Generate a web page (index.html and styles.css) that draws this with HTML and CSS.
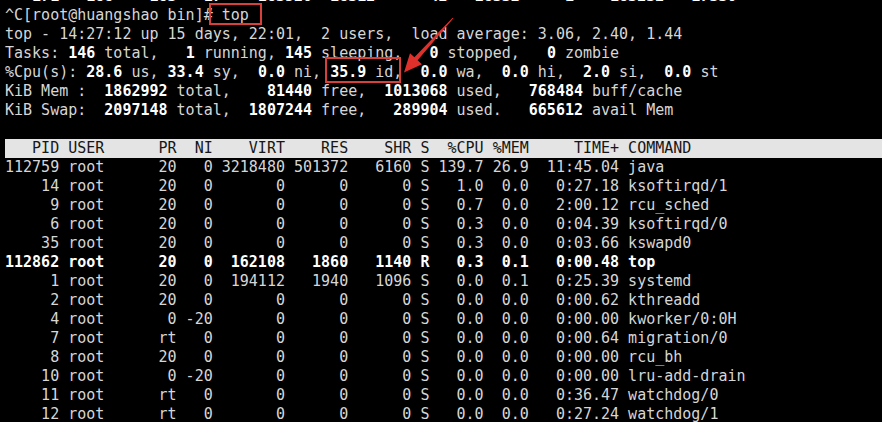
FILE: index.html
```html
<!DOCTYPE html>
<html lang="en">

<head>
    <meta charset="UTF-8">
    <meta name="viewport" content="width=device-width, initial-scale=1.0">
    <title>top</title>
    <link rel="stylesheet" href="styles.css">
</head>

<body>
    <div class="term">
        <!-- 上一屏残留的一行，只露出底部 -->
        <div class="line"><b>   171   188    183   17    183520  18312      42   18332     1    183232   17330</b></div>
        <div class="line">^C[root@huangshao bin]# top</div>
        <div class="line">top - 14:27:12 up 15 days, 22:01,  2 users,  load average: 3.06, 2.40, 1.44</div>
        <div class="line">Tasks: <b>146</b> total,   <b>1</b> running, <b>145</b> sleeping,   <b>0</b> stopped,   <b>0</b> zombie</div>
        <div class="line">%Cpu(s): <b>28.6</b> us, <b>33.4</b> sy,  <b>0.0</b> ni, <b>35.9</b> id,  <b>0.0</b> wa,  <b>0.0</b> hi,  <b>2.0</b> si,  <b>0.0</b> st</div>
        <div class="line">KiB Mem :  <b>1862992</b> total,    <b>81440</b> free,  <b>1013068</b> used,   <b>768484</b> buff/cache</div>
        <div class="line">KiB Swap:  <b>2097148</b> total,  <b>1807244</b> free,   <b>289904</b> used.   <b>665612</b> avail Mem</div>
        <div class="line"> </div>
        <div class="line head">   PID USER      PR  NI    VIRT    RES    SHR S  %CPU %MEM     TIME+ COMMAND</div>
        <div class="line">112759 root      20   0 3218480 501372   6160 S 139.7 26.9  11:45.04 java</div>
        <div class="line">    14 root      20   0       0      0      0 S   1.0  0.0   0:27.18 ksoftirqd/1</div>
        <div class="line">     9 root      20   0       0      0      0 S   0.7  0.0   2:00.12 rcu_sched</div>
        <div class="line">     6 root      20   0       0      0      0 S   0.3  0.0   0:04.39 ksoftirqd/0</div>
        <div class="line">    35 root      20   0       0      0      0 S   0.3  0.0   0:03.66 kswapd0</div>
        <div class="line"><b>112862 root      20   0  162108   1860   1140 R   0.3  0.1   0:00.48 top</b></div>
        <div class="line">     1 root      20   0  194112   1940   1096 S   0.0  0.1   0:25.39 systemd</div>
        <div class="line">     2 root      20   0       0      0      0 S   0.0  0.0   0:00.62 kthreadd</div>
        <div class="line">     4 root       0 -20       0      0      0 S   0.0  0.0   0:00.00 kworker/0:0H</div>
        <div class="line">     7 root      rt   0       0      0      0 S   0.0  0.0   0:00.64 migration/0</div>
        <div class="line">     8 root      20   0       0      0      0 S   0.0  0.0   0:00.00 rcu_bh</div>
        <div class="line">    10 root       0 -20       0      0      0 S   0.0  0.0   0:00.00 lru-add-drain</div>
        <div class="line">    11 root      rt   0       0      0      0 S   0.0  0.0   0:36.47 watchdog/0</div>
        <div class="line">    12 root      rt   0       0      0      0 S   0.0  0.0   0:27.24 watchdog/1</div>
    </div>

    <!-- 标注：红框 + 箭头 -->
    <svg class="marks" width="882" height="422" viewBox="0 0 882 422">
        <rect x="210" y="4" width="51" height="20" fill="none" stroke="#d8403c" stroke-width="2" />
        <rect x="326" y="58" width="74" height="24" fill="none" stroke="#d8403c" stroke-width="2" />
        <polygon fill="#e0302c"
            points="453.4,18.3 417.6,60.2 422,64.2 404,72.5 410,53.2 414.4,57.3 452.6,17.7" />
    </svg>
</body>

</html>
```

FILE: styles.css
```css
html,
body {
    margin: 0;
    padding: 0;
    background: #000;
}

body {
    width: 882px;
    height: 422px;
    overflow: hidden;
    position: relative;
}

.term {
    margin-top: -13.5px;
    padding-left: 5px;
    font-family: "DejaVu Sans Mono", "Liberation Mono", monospace;
    font-size: 15px;
    line-height: 19px;
    color: #d6d6d6;
}

.line {
    white-space: pre;
    height: 19px;
}

.line b {
    color: #fff;
    font-weight: bold;
}

/* 表头反白 */
.head {
    background: #e4e4e4;
    color: #161616;
}

.marks {
    position: absolute;
    left: 0;
    top: 0;
}
```
